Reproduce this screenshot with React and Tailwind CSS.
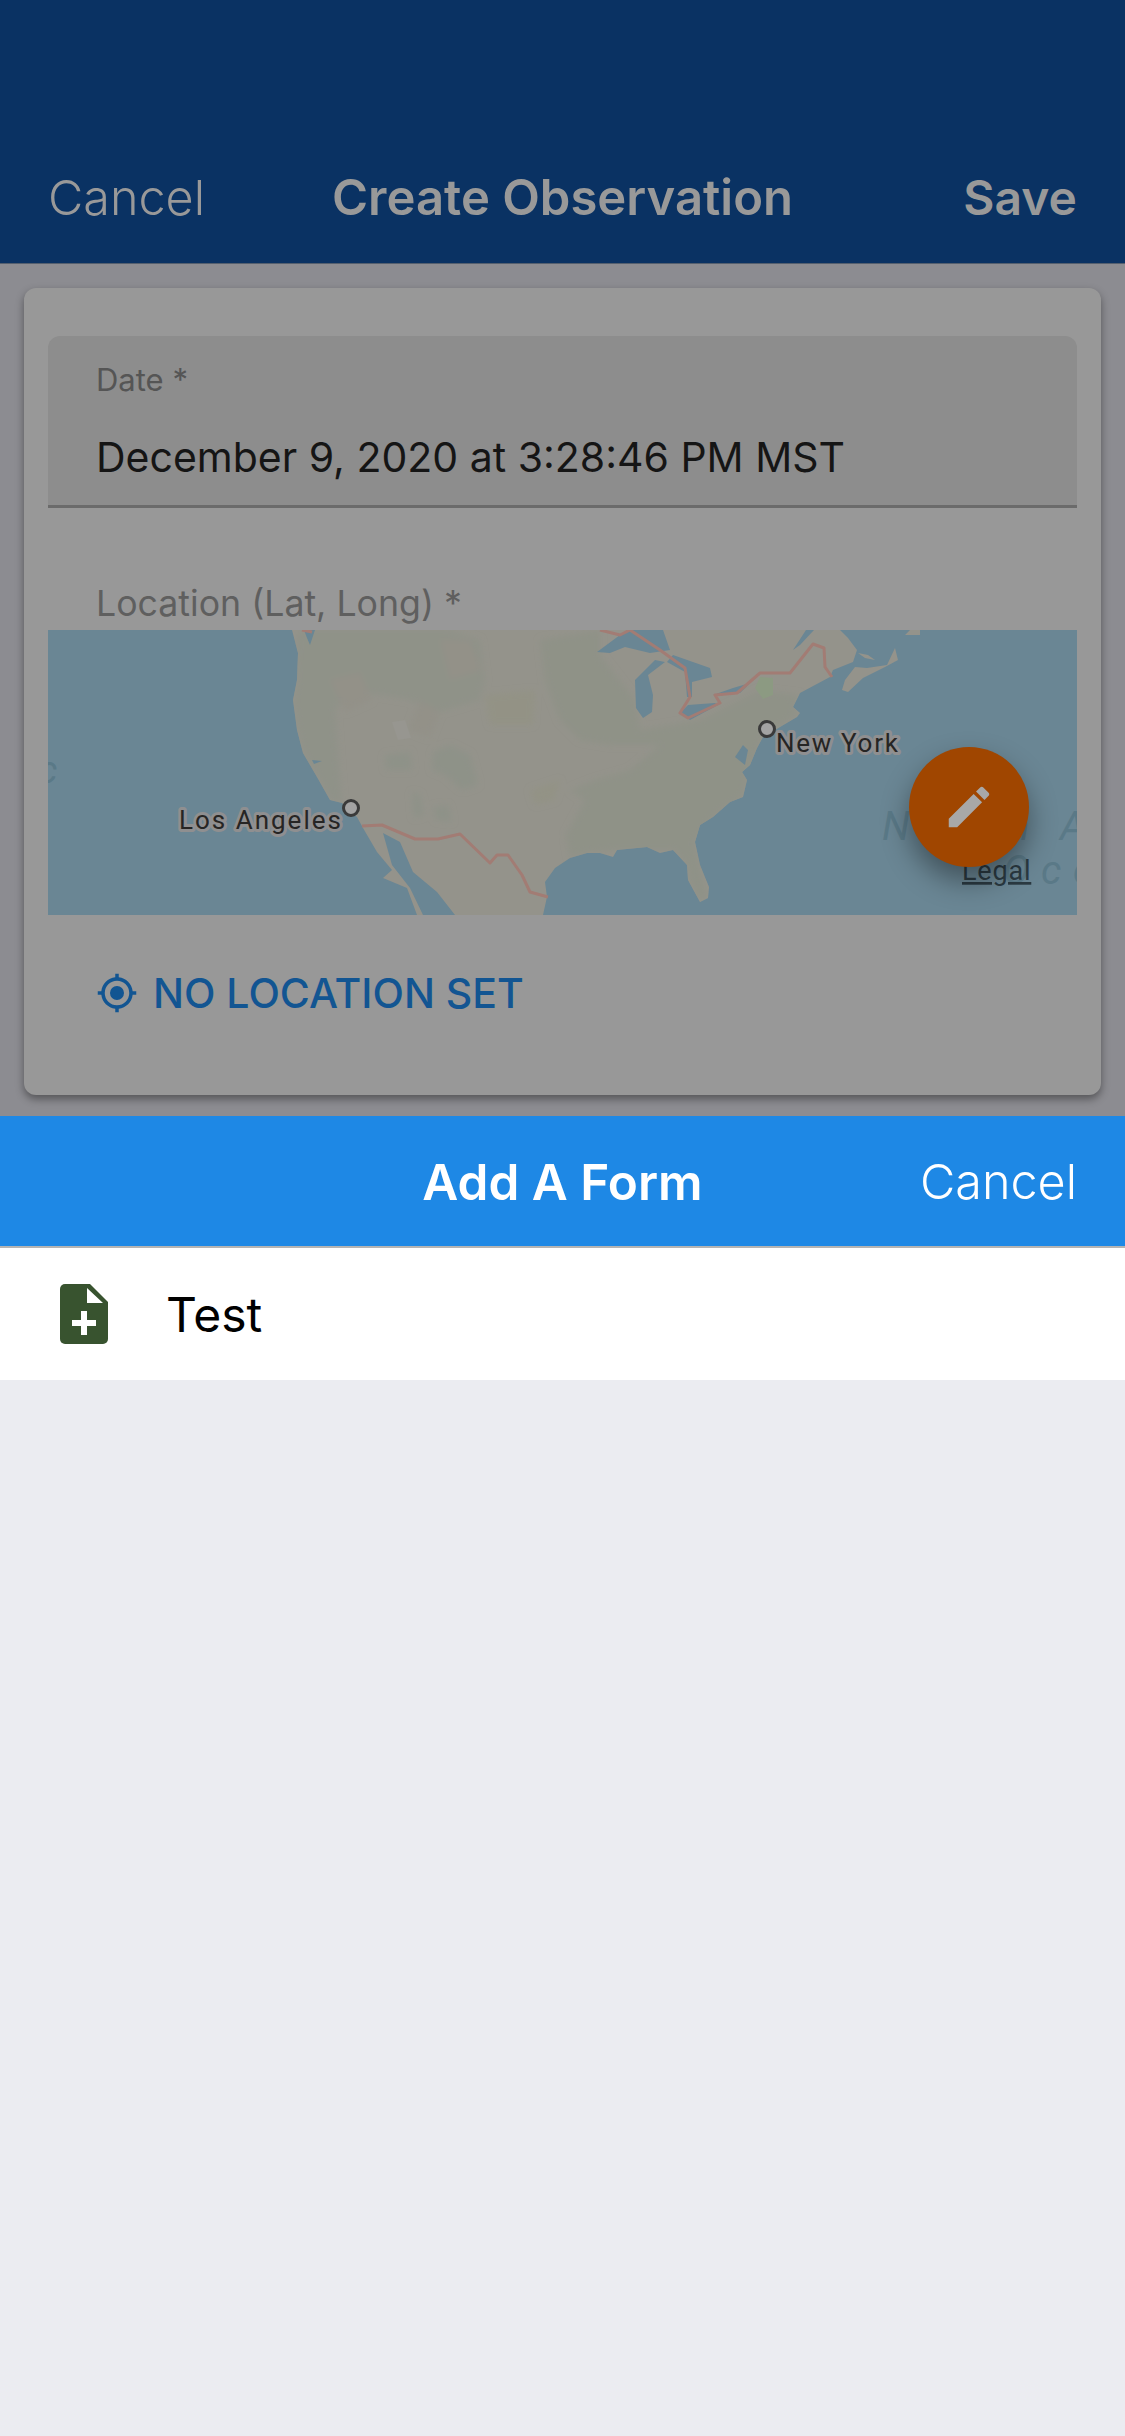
import React from "react";

function MapArt() {
  return (
    <svg viewBox="48 630 1029 285" className="block w-full h-full">
      <defs>
        <filter id="soft" x="-5%" y="-5%" width="110%" height="110%">
          <feGaussianBlur stdDeviation="3" />
        </filter>
        <clipPath id="landclip">
          <path d="M292 630L298 653 297 680 293 700 297 730 303 753 317 777 330 800 342 803 357 817 363 828 377 852 392 870 383 878 407 888 417 915 543 915 547 897 545 882 555 868 570 858 587 853 600 853 613 857 617 850 647 847 660 853 673 850 687 865 688 880 700 902 708 898 709 887 700 865 695 842 700 825 713 817 730 802 743 797 747 780 742 772 750 765 757 748 763 737 797 717 800 713 793 707 800 693 830 677 833 670 853 662 857 650 848 638 840 630Z" />
        </clipPath>
      </defs>
      <rect x="48" y="630" width="1029" height="285" fill="#6a8694" />
      <path fill="#94938b" d="M292 630L298 653 297 680 293 700 297 730 303 753 317 777 330 800 342 803 357 817 363 828 377 852 392 870 383 878 407 888 417 915 543 915 547 897 545 882 555 868 570 858 587 853 600 853 613 857 617 850 647 847 660 853 673 850 687 865 688 880 700 902 708 898 709 887 700 865 695 842 700 825 713 817 730 802 743 797 747 780 742 772 750 765 757 748 763 737 797 717 800 713 793 707 800 693 830 677 833 670 853 662 857 650 848 638 840 630Z" />
      <g clipPath="url(#landclip)">
        <g filter="url(#soft)">
          <path fill="#8f9287" d="M540 640L600 630 600 655 635 700 640 730 700 720 760 690 800 695 793 707 800 713 763 737 747 780 743 797 713 817 695 842 700 865 708 898 700 902 688 880 687 865 673 850 617 850 587 853 570 858 566 835 585 800 570 790 595 780 630 770 660 745 610 745 580 740 560 720 545 680Z" />
          <path fill="#8f9288" d="M296 640L300 630 400 630 450 630 480 640 485 680 480 700 440 712 410 700 380 695 350 690 335 710 340 780 342 803 330 800 317 777 303 753 297 730 293 700 297 680Z" />
          <path fill="#8e9288" d="M433 752L450 745 470 755 478 785 462 790 445 775 432 770ZM412 792L420 795 424 815 414 818ZM433 807L448 805 452 822 436 820ZM385 755L410 752 412 770 386 770Z" />
          <path fill="#939188" d="M330 680L360 672 372 700 345 712ZM440 640L470 640 482 670 450 680ZM420 700L440 712 430 738 408 730Z" />
          <path fill="#939382" d="M485 695L535 690 533 725 490 725ZM530 790L560 780 555 800 535 805Z" opacity=".6" />
        </g>
        <path fill="#979690" d="M392 722L405 720 411 738 398 740Z" />
        <path fill="#8c9a82" d="M755 688L760 677 773 678 773 695 763 699Z" />
      </g>
      <path fill="#94938b" d="M842 690L848 692 863 678 885 667 898 660 895 648 887 665 867 668 855 667 845 680ZM858 653L868 655 875 660 865 658ZM905 635L910 630 920 630 920 635Z" />
      <path fill="#6a8694" d="M383 833L400 842 413 872 437 892 455 915 423 915 410 888 392 865ZM597 652L620 635 628 630 663 630 670 650 650 653 625 647 610 653ZM673 655L710 668 712 677 692 682 692 697 687 697 685 672 667 662ZM655 660L635 680 636 708 643 718 652 712 653 695 648 675 665 662ZM680 713L690 720 718 705 715 703 688 705ZM713 695L740 693 750 683 733 688ZM793 650L806 630 814 630 800 645ZM743 745L735 757 745 765 748 750ZM304 630L315 630 310 645 307 638ZM312 760L322 761 314 764Z" />
      <g fill="none" stroke="#a27c74" strokeWidth="3" strokeLinejoin="round">
        <path d="M362 826L382 825 415 839 438 839 460 834 490 863 497 855 508 855 522 875 530 892 548 897" />
        <path d="M600 630L620 635 630 630 660 650 685 668 690 697 680 713 688 718 720 703 715 695 737 693 760 673 790 673 813 644 824 648 825 667 832 677" />
        <path d="M302 630L312 632" />
      </g>
      <g className="font-['Roboto',sans-serif] [paint-order:stroke]">
        <g fontSize="40" fontStyle="italic" fontWeight="400" fill="#5a7987">
          <text x="882" y="840">N</text>
          <text x="1008" y="840">h</text>
          <text x="1060" y="840">A</text>
          <text x="1003" y="884">O</text>
          <text x="1041" y="884">c</text>
          <text x="1073" y="884">e</text>
          <text x="38" y="783" fontSize="38">c</text>
        </g>
        <text x="179" y="829" fontSize="26" letterSpacing="2" fontWeight="400" fill="#262524" stroke="#8f8f90" strokeWidth="6" strokeLinejoin="round">Los Angeles</text>
        <text x="776" y="752" fontSize="26" letterSpacing="1.7" fontWeight="400" fill="#262524" stroke="#8f8f90" strokeWidth="6" strokeLinejoin="round">New York</text>
        <text x="962" y="880" fontSize="27" letterSpacing=".8" fontWeight="400" fill="#2b3a42" textDecoration="underline">Legal</text>
      </g>
      <circle cx="351" cy="808" r="7.5" fill="#a3a3a3" stroke="#3a3a3a" strokeWidth="3" />
      <circle cx="767" cy="729" r="7.5" fill="#a3a3a3" stroke="#3a3a3a" strokeWidth="3" />
    </svg>
  );
}

export default function App() {
  return (
    <div className="w-[1125px] h-[2436px] flex flex-col bg-[#ebecf1] overflow-hidden font-['Inter',sans-serif]">
      <header className="h-[264px] shrink-0 flex items-end justify-between bg-[#0a3263] border-b border-[#55606f] pb-[35px] pl-[48px] pr-[48px] text-[#999999]">
        <span className="text-[48.5px] leading-[60px] font-light w-[160px]">Cancel</span>
        <span className="text-[49px] leading-[60px] font-semibold">Create Observation</span>
        <span className="text-[48px] leading-[60px] font-semibold w-[160px] text-right">Save</span>
      </header>

      <main className="h-[852px] shrink-0 bg-[#8c8c91] px-6 pt-6">
        <section className="h-[807px] rounded-xl bg-[#989898] shadow-[0_4px_8px_rgba(0,0,0,0.4)] pt-12 px-6">
          <div className="h-[172px] rounded-t-xl bg-[#8d8d8d] border-b-[3px] border-[#6b6b6b] pt-6 px-[48px]">
            <div className="text-[31px] leading-[40px] text-[#555555]">Date *</div>
            <div className="mt-[29px] text-[41px] leading-[56px] text-[#151515] whitespace-nowrap">December 9, 2020 at 3:28:46 PM MST</div>
          </div>
          <div className="mt-[75px] pl-[48px] text-[35.7px] leading-[40px] text-[#5f5f5f]">Location (Lat, Long) *</div>
          <div className="relative mt-[7px] h-[285px]">
            <MapArt />
            <button className="absolute right-[48px] top-[117px] w-[120px] h-[120px] rounded-full bg-[#a04600] flex items-center justify-center shadow-[0_14px_28px_rgba(0,0,0,0.38)]">
              <svg viewBox="0 0 24 24" width="54" height="54" fill="#a8a8a8">
                <path d="M3 17.25V21h3.75L17.81 9.94l-3.75-3.75L3 17.25zM20.71 7.04c.39-.39.39-1.02 0-1.41l-2.34-2.34c-.39-.39-1.02-.39-1.41 0l-1.83 1.83 3.75 3.75 1.83-1.83z" />
              </svg>
            </button>
          </div>
          <div className="mt-[57px] pl-[48px] flex items-center h-[42px] text-[#125592]">
            <svg viewBox="0 0 24 24" width="42" height="42" fill="currentColor" className="shrink-0">
              <path d="M12,8A4,4 0 0,1 16,12A4,4 0 0,1 12,16A4,4 0 0,1 8,12A4,4 0 0,1 12,8M3.05,13H1V11H3.05C3.5,6.83 6.83,3.5 11,3.05V1H13V3.05C17.17,3.5 20.5,6.83 20.95,11H23V13H20.95C20.5,17.17 17.17,20.5 13,20.95V23H11V20.95C6.83,20.5 3.5,17.17 3.05,13M12,5A7,7 0 0,0 5,12A7,7 0 0,0 12,19A7,7 0 0,0 19,12A7,7 0 0,0 12,5Z" />
            </svg>
            <span className="ml-[15px] text-[41px] leading-[42px] font-medium whitespace-nowrap">NO LOCATION SET</span>
          </div>
        </section>
      </main>

      <div className="h-[132px] shrink-0 bg-[#1e88e5] border-b-2 border-[#b4b4b4] flex items-center justify-between pt-[2px] pl-[48px] pr-[48px] text-white">
        <span className="w-[160px]" />
        <span className="text-[49.5px] leading-[60px] font-semibold">Add A Form</span>
        <span className="text-[48.5px] leading-[60px] font-light w-[160px] text-right">Cancel</span>
      </div>

      <div className="h-[132px] shrink-0 bg-white flex items-center pl-[60px]">
        <svg viewBox="0 0 48 60" width="48" height="60" className="shrink-0">
          <path fill="#38532f" d="M5 0H30L48 18V55a5 5 0 0 1-5 5H5a5 5 0 0 1-5-5V5a5 5 0 0 1 5-5Z" />
          <path fill="#ffffff" d="M27 4V19H43ZM21 27H27V36H36V42H27V51H21V42H12V36H21Z" />
        </svg>
        <span className="ml-[58px] pt-[2px] text-[48px] leading-[60px] text-black">Test</span>
      </div>
    </div>
  );
}
